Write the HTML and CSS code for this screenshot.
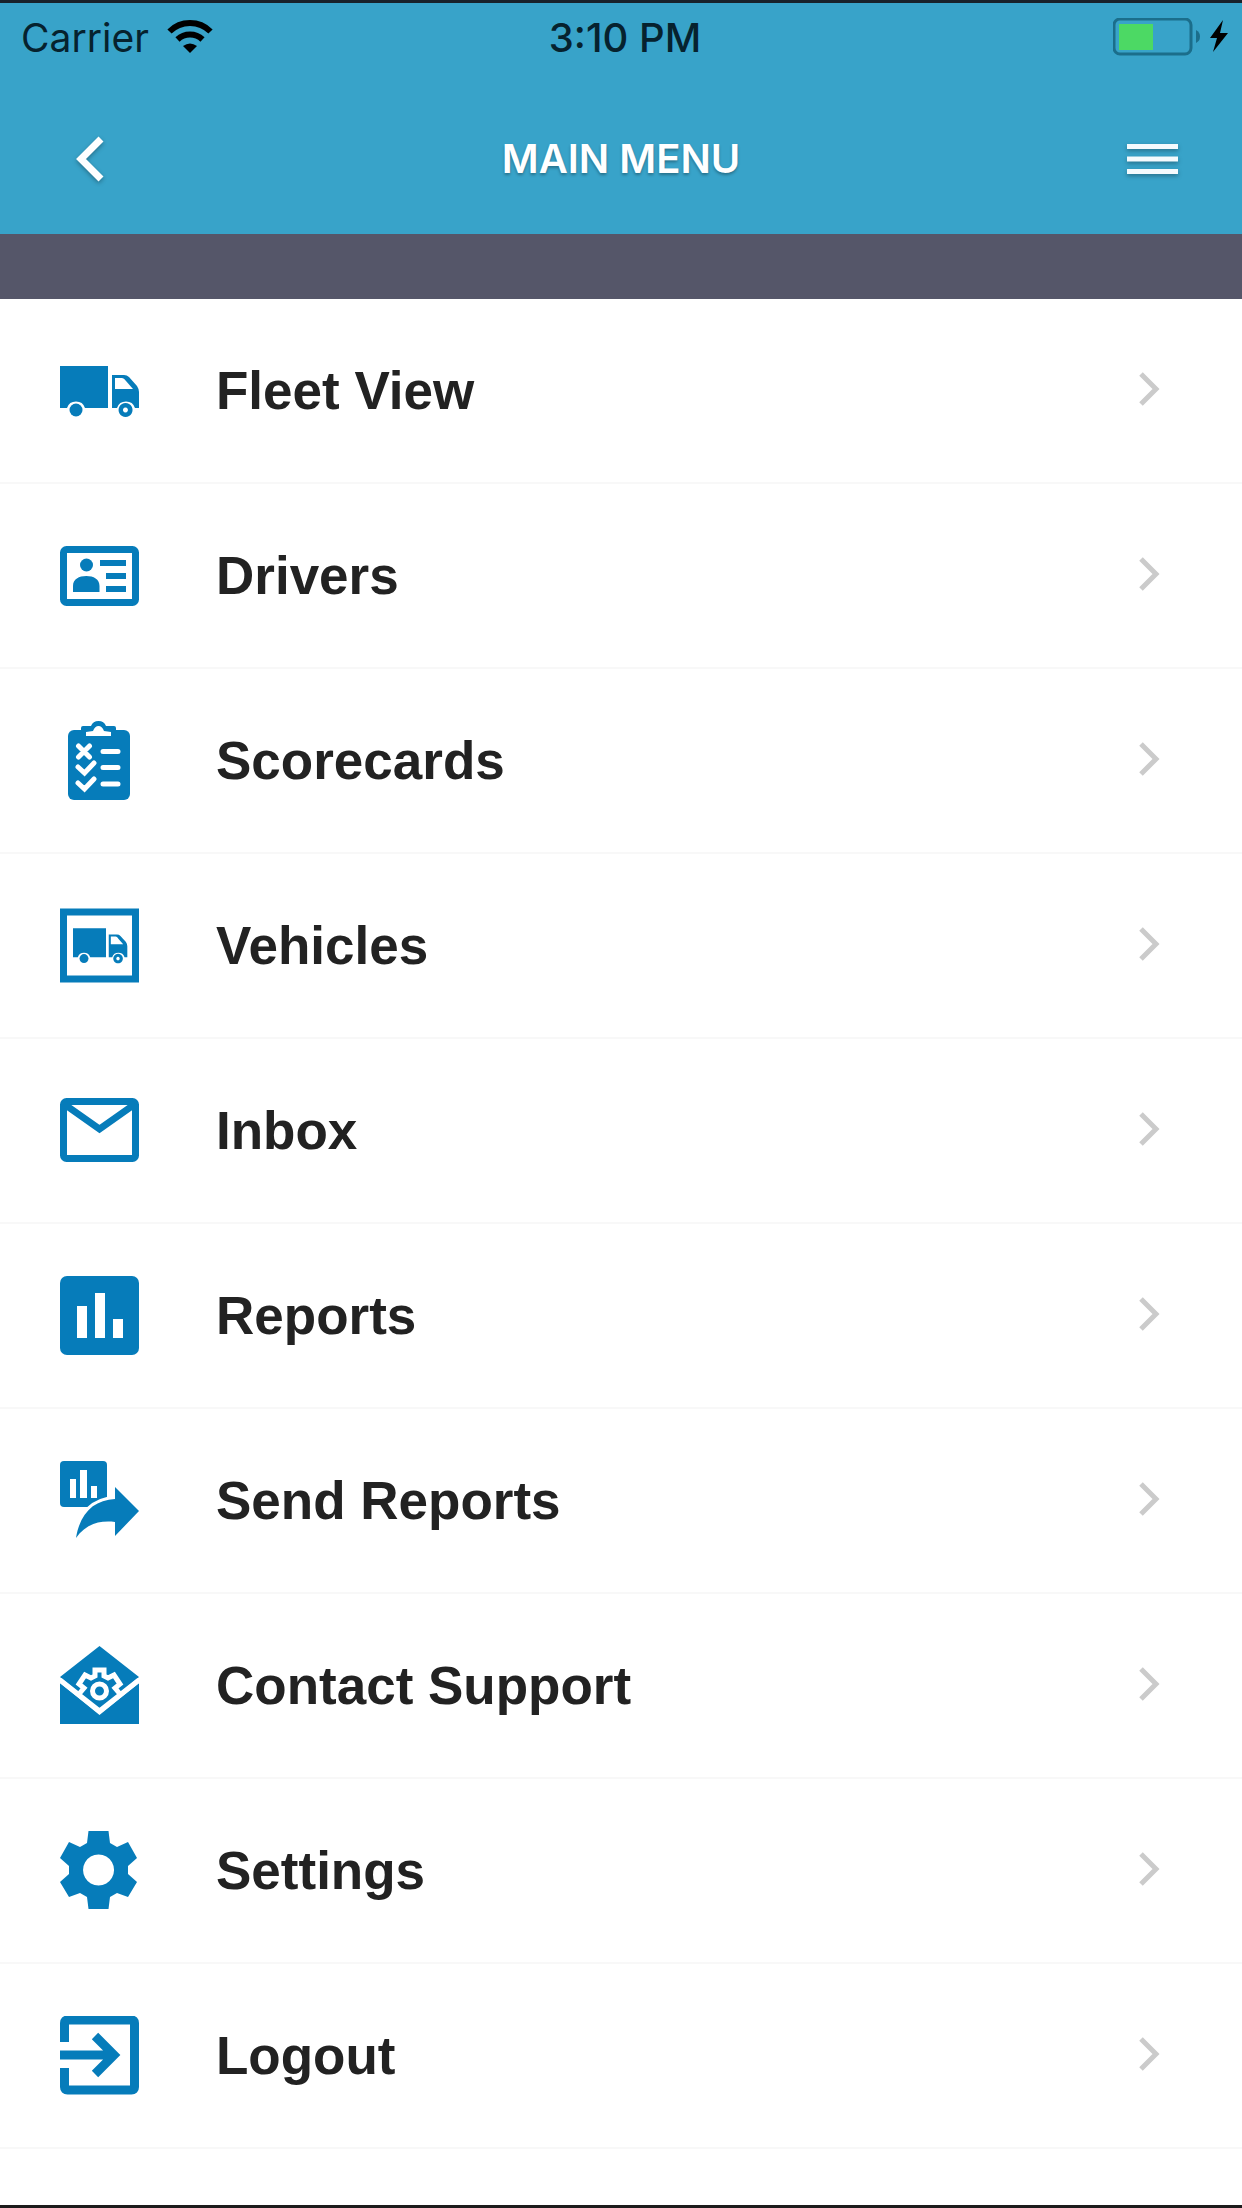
FILE: index.html
```html
<!DOCTYPE html>
<html lang="en">
<head>
    <meta charset="UTF-8">
    <meta name="viewport" content="width=device-width, initial-scale=1.0">
    <title>Main Menu</title>
    <link rel="stylesheet" href="styles.css">
</head>
<body>
    <svg class="sprites" aria-hidden="true">
        <symbol id="truck" viewBox="0 0 80 80">
            <path fill-rule="evenodd" d="M0 15h48v42H25a9.500 9.500 0 0 0-18 0H0zM52 24h12q3 0 5 2l8 9q2 3 2 6v16h-4a9.500 9.500 0 0 0-18 0h-5zM55 27v11h18l-7-8q-2-3-4-3z"/>
            <circle cx="16" cy="59" r="6.500"/>
            <path fill-rule="evenodd" d="M65.500 52a7 7 0 1 0 .1 0zM65.500 56.500a2.500 2.500 0 1 1-.1 0z"/>
        </symbol>
        <symbol id="chevron" viewBox="0 0 24 40">
            <path d="M3 3l15 15L3 33" fill="none" stroke="#cbcbcb" stroke-width="5"/>
        </symbol>
    </svg>

    <div class="page">
        <header>
            <div class="status">
                <div class="carrier">
                    <span>Carrier</span>
                    <svg width="46" height="34" viewBox="0 0 46 34">
                        <g fill="none" stroke="#000" stroke-width="6">
                            <path d="M2.500 11.500a29 29 0 0 1 41 0"/>
                            <path d="M10.500 19.500a18 18 0 0 1 25 0"/>
                        </g>
                        <path d="M23 33l-7-7q7-5 14 0z"/>
                    </svg>
                </div>
                <span class="time">3:10 PM</span>
                <div class="battery">
                    <svg width="116" height="38" viewBox="0 0 116 38">
                        <rect x="1" y="1" width="77" height="35" rx="6" fill="none" stroke="#1b6e8b" stroke-width="3"/>
                        <rect x="6" y="6" width="34" height="26" fill="#4cd964"/>
                        <path d="M83 12q4 2 4 6.500t-4 6.500z" fill="#1b6e8b"/>
                        <path d="M110 2L97 20h7l-4 14 15-19h-8z"/>
                    </svg>
                </div>
            </div>
            <div class="nav">
                <button type="button" aria-label="Back">
                    <svg width="52" height="52" viewBox="0 0 52 52">
                        <path d="M37 6L17 26l20 20" fill="none" stroke="#fff" stroke-width="7"/>
                    </svg>
                </button>
                <h1>MAIN MENU</h1>
                <button type="button" aria-label="Menu">
                    <svg width="52" height="52" viewBox="0 0 52 52">
                        <path d="M1 13.500h51M1 26h51M1 38.500h51" stroke="#f4fafd" stroke-width="5"/>
                    </svg>
                </button>
            </div>
        </header>
        <div class="band"></div>

        <nav>
            <ul class="menu">
                <li><a href="#fleet">
                    <svg class="icon"><use href="#truck"/></svg>
                    <span>Fleet View</span>
                    <svg class="arrow"><use href="#chevron"/></svg>
                </a></li>
                <li><a href="#drivers">
                    <svg class="icon" viewBox="0 0 80 80">
                        <rect class="line" x="3.500" y="13.500" width="72" height="53" rx="3"/>
                        <circle cx="26.500" cy="29" r="6.500"/>
                        <path d="M13 56v-6c0-7 6-10 13.300-10S39.500 43 39.500 50v6zM40 24h26v6H40zM46 37h20v6H46zM46 50h20v6H46z"/>
                    </svg>
                    <span>Drivers</span>
                    <svg class="arrow"><use href="#chevron"/></svg>
                </a></li>
                <li><a href="#scorecards">
                    <svg class="icon" viewBox="0 0 80 80">
                        <rect x="8" y="9" width="62" height="70" rx="6"/>
                        <path d="M21 15V7q0-2 2-2h8q2-5 7.500-5T46 5h8q2 0 2 2v8z"/>
                        <path class="cut" d="M26 15v-4l7-1q2-5 5.500-5t5.500 5l7 1v4z"/>
                        <path class="cut-line round" d="M18.500 25l11 11M29.500 25l-11 11M18 46l6.500 6L34 42M18 62l6.500 6L34 58M43 30.500h15M43 46.500h15M43 63h15"/>
                    </svg>
                    <span>Scorecards</span>
                    <svg class="arrow"><use href="#chevron"/></svg>
                </a></li>
                <li><a href="#vehicles">
                    <svg class="icon" viewBox="0 0 80 80">
                        <rect class="line" x="3.500" y="6" width="72" height="67"/>
                        <use href="#truck" x="13" y="12" width="55" height="55"/>
                    </svg>
                    <span>Vehicles</span>
                    <svg class="arrow"><use href="#chevron"/></svg>
                </a></li>
                <li><a href="#inbox">
                    <svg class="icon" viewBox="0 0 80 80">
                        <rect class="line" x="3.500" y="10.500" width="72" height="57" rx="3"/>
                        <path class="line" d="M4 13l35.500 25L75 13"/>
                    </svg>
                    <span>Inbox</span>
                    <svg class="arrow"><use href="#chevron"/></svg>
                </a></li>
                <li><a href="#reports">
                    <svg class="icon" viewBox="0 0 80 80">
                        <rect width="79" height="79" rx="7"/>
                        <path class="cut" d="M17 30h10v32H17zM35 17h10v45H35zM53 43h10v19H53z"/>
                    </svg>
                    <span>Reports</span>
                    <svg class="arrow"><use href="#chevron"/></svg>
                </a></li>
                <li><a href="#send-reports">
                    <svg class="icon" viewBox="0 0 80 80">
                        <rect width="47" height="46" rx="4"/>
                        <path class="cut" d="M10 18h6v19h-6zM20 9h7v28h-7zM31 25h6v12h-6z"/>
                        <path stroke="#fff" stroke-width="6" paint-order="stroke" d="M16 77C20 52 34 39 55 38V26l24 24-24 25V61C38 59 25 64 16 77z"/>
                    </svg>
                    <span>Send Reports</span>
                    <svg class="arrow"><use href="#chevron"/></svg>
                </a></li>
                <li><a href="#support">
                    <svg class="icon" viewBox="0 0 80 80">
                        <path d="M39.500 0L79 31 39.500 64 0 31zM0 37l39.500 32L79 37v41H0z"/>
                        <path class="cut-line" d="M0 34l39.500 31L79 34"/>
                        <path class="cut-line" d="M19 48l5-6-5-4 6-9 6 3 4-2v-6h9v6l4 2 6-3 6 9-5 4 5 6"/>
                        <circle class="cut-line" cx="39.500" cy="45" r="7"/>
                    </svg>
                    <span>Contact Support</span>
                    <svg class="arrow"><use href="#chevron"/></svg>
                </a></li>
                <li><a href="#settings">
                    <svg class="icon" viewBox="0 0 80 80">
                        <path fill-rule="evenodd" d="M28.500 0h20l1.500 12 7 4 11-5 9 16-9 8v8l9 8-9 15-11-4-7 4-1.500 12h-20L27 66l-7-4-11 4-9-15 9-8v-8l-9-8 9-16 11 5 7-4zM38.500 23.500a15.500 15.500 0 1 0 .1 0z"/>
                    </svg>
                    <span>Settings</span>
                    <svg class="arrow"><use href="#chevron"/></svg>
                </a></li>
                <li><a href="#logout">
                    <svg class="icon" viewBox="0 0 80 80">
                        <path class="line thick" d="M4.500 26V7q0-3 3-3h64q3 0 3 3v64q0 3-3 3h-64q-3 0-3-3V52M0 39h53M35 20l19 19-19 19"/>
                    </svg>
                    <span>Logout</span>
                    <svg class="arrow"><use href="#chevron"/></svg>
                </a></li>
            </ul>
        </nav>
    </div>
</body>
</html>
```
FILE: styles.css
```css
* {
    box-sizing: border-box;
}
body {
    margin: 0;
    background: #fff;
    font-family: "Liberation Sans", Arial, sans-serif;
}
svg {
    display: block;
}
.sprites {
    display: none;
}
.page {
    min-height: 100vh;
    border-top: 3px solid #18222b;
    border-bottom: 3px solid #1c1c1c;
}
header {
    background: #38a3c9;
    font-family: Inter, sans-serif;
}
.status {
    display: grid;
    grid-template-columns: 1fr auto 1fr;
    align-items: center;
    height: 68px;
    padding: 0 13px 0 21px;
    font-size: 39px;
    color: #06222e;
}
.carrier {
    display: flex;
    align-items: center;
    gap: 18px;
}
.time {
    font-size: 40px;
    font-weight: 500;
}
.battery {
    display: flex;
    justify-content: flex-end;
}
.nav {
    display: flex;
    align-items: center;
    justify-content: space-between;
    height: 163px;
    padding: 12px 64px 0;
}
.nav h1 {
    margin: 0;
    font-size: 40px;
    font-weight: 600;
    color: #fff;
    text-shadow: 0 2px 3px rgba(0, 0, 0, 0.3);
}
.nav button {
    padding: 0;
    border: 0;
    background: none;
    cursor: pointer;
    filter: drop-shadow(0 2px 2px rgba(0, 0, 0, 0.3));
}
.band {
    height: 65px;
    background: #555669;
}
.menu {
    margin: 0;
    padding: 0;
    list-style: none;
}
.menu a {
    display: flex;
    align-items: center;
    gap: 76px;
    height: 185px;
    padding: 0 80px 0 60px;
    border-bottom: 2px solid #f8f8f8;
    font-size: 53px;
    font-weight: bold;
    color: #222;
    text-decoration: none;
}
.menu span {
    flex: 1;
}
.icon {
    width: 80px;
    height: 80px;
    fill: #067cba;
}
.arrow {
    width: 24px;
    height: 40px;
}
.line {
    fill: none;
    stroke: #067cba;
    stroke-width: 7;
}
.thick {
    stroke-width: 9;
}
.cut {
    fill: #fff;
}
.cut-line {
    fill: none;
    stroke: #fff;
    stroke-width: 5;
}
.round {
    stroke-linecap: round;
}
```
